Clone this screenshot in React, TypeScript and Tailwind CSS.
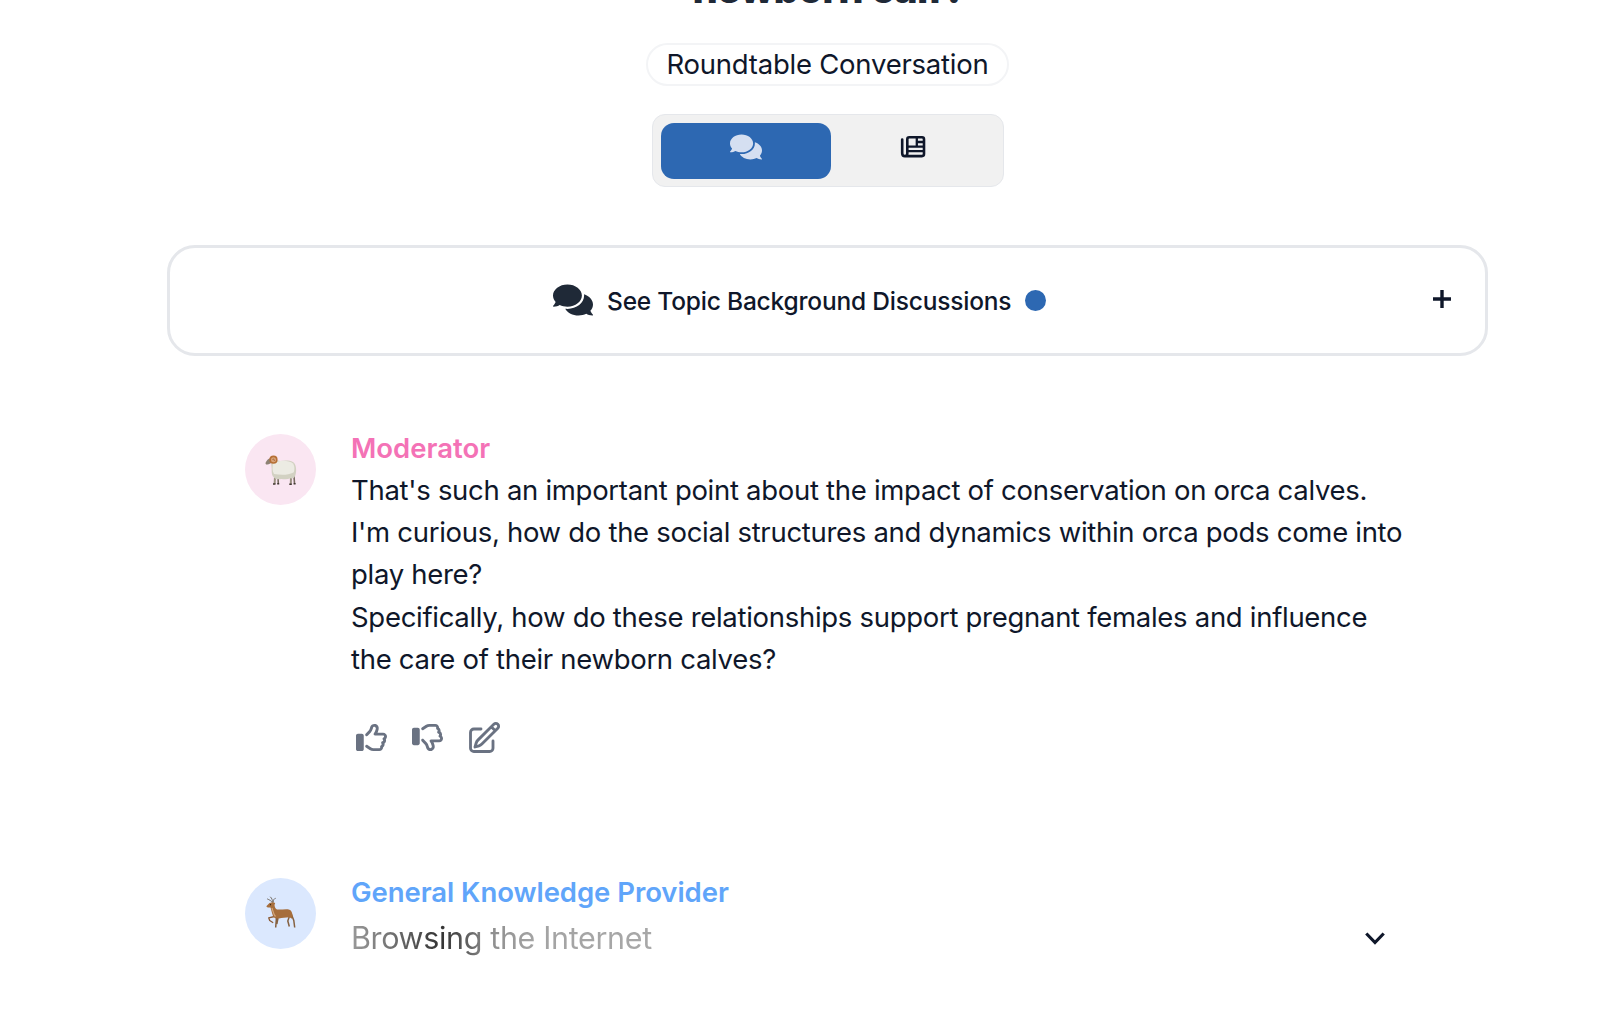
import type { ReactNode } from 'react';
import { FaComments } from 'react-icons/fa';
import { FaRegThumbsUp, FaRegThumbsDown } from 'react-icons/fa6';
import { HiOutlinePencilSquare } from 'react-icons/hi2';

const moderatorLines = [
    "That's such an important point about the impact of conservation on orca calves.",
    "I'm curious, how do the social structures and dynamics within orca pods come into",
    'play here?',
    'Specifically, how do these relationships support pregnant females and influence',
    'the care of their newborn calves?',
];

function NewsIcon() {
    return (
        <svg viewBox="0 0 36 34" className="h-[34px] w-[36px]" fill="none" stroke="currentColor" strokeWidth="2.6">
            <path d="M6.200 9.500v13.700c0 1.800 1 2.900 2.700 2.900H26c1.200 0 2-.8 2-2V9.200c0-1.200-.8-2-2-2H13.300c-1.200 0-2 .8-2 2v14.300c0 1.700-.9 2.600-2.400 2.600" strokeLinecap="round" />
            <path d="M12 16.600h16M12 21.200h16M20.800 8v8.500M21 12h7" strokeWidth="2.3" />
        </svg>
    );
}

function Ram() {
    return (
        <svg viewBox="0 0 42 42" className="h-[42px] w-[42px]">
            <path d="M18 28 18.300 34.500M34 27 34.500 34.500" stroke="#75695f" strokeWidth="1.600" />
            <path d="M15 28 14.600 35M31 28 30.800 35" stroke="#9a9080" strokeWidth="2" />
            <path d="M13 35h2.500M17.200 34.800h2M29.300 35.200h2.500M33.600 34.800h2" stroke="#413932" strokeWidth="1.500" />
            <path d="M11 12.500c2-2.500 6-1.500 9-.4 4-.9 9.500-1.100 13 .9 3.600 2.400 3.800 9.500 2.300 13.500-.8 2.500-2.700 3.500-4.500 2.800-3.500 1.300-6.500 1.200-9.500.6-3 .9-6.300.4-7.800-1.900-2.500-2.600-1.500-6.500-2-10Z" fill="#d2d1c2" />
            <path d="M13 14c5-3 16-3.500 20 .5 2 3 1.500 7 .5 9-6 3-13 2.500-19.500 1.500-2-3-1.500-7-1-11Z" fill="#ecebe3" />
            <path d="M11 9c-2.500.2-4.300 2.400-5.300 4.500-.5 1.300.2 2.200 1.700 2 1.700-.2 3.200-.8 4.200-2Z" fill="#8d8274" />
            <circle cx="13.500" cy="10.700" r="3.300" fill="#d8a278" stroke="#b66f35" strokeWidth="1.600" />
            <path d="M12.500 10.500c1-1 2.500.2 1.700 1.500" fill="none" stroke="#9a5c2c" strokeWidth=".8" />
        </svg>
    );
}

function Deer() {
    return (
        <svg viewBox="0 0 42 42" className="h-[42px] w-[42px]">
            <path d="M12.300 10.500C11.500 8.800 9.500 8 7.500 7M12.800 10C12 8 12.300 6.500 10.500 5M13.200 10c-.2-2 .8-3.300 2.100-3.600" fill="none" stroke="#777069" strokeWidth="1" strokeLinecap="round" />
            <path d="M16.500 25 15.700 35.500M18 26l-1.200 6M29.500 24l-1.700 5 1.500 5.500M31.500 22.500l2.300 6 .9 7" fill="none" stroke="#85603f" strokeWidth="1.500" strokeLinejoin="round" />
            <path d="m14.500 24.500-5.800 1.300 1 2.700 3.500 2.200" fill="none" stroke="#8c5b35" strokeWidth="1.300" strokeLinejoin="round" />
            <path d="M6.300 14.200 9.500 11l3.500-.7 2.200.7-.7 2c.3 2 .8 3.800 2.500 4.500 4.500.4 9-.8 12.500.2 2 .7 2.800 3 3.100 6l-.6 3-2.500-1.500c-4 .5-7.500.7-10.500 1.200-2.500.6-5-.3-6-2.400-1-2.500-1.500-5.500-2.500-8.500-1.500-.3-3.200.4-4.200-1.300Z" fill="#a66e3c" />
            <path d="M12 16c1 3 1.500 6.500 3.500 8.500" fill="none" stroke="#d2a57a" strokeWidth="1.200" />
            <circle cx="10.500" cy="12.700" r=".6" fill="#2b1a0f" />
        </svg>
    );
}

function Message({ avatar, tint, children }: { avatar: ReactNode; tint: string; children: ReactNode }) {
    return (
        <div className="flex gap-[35px]">
            <div className={`flex h-[71px] w-[71px] shrink-0 items-center justify-center rounded-full ${tint}`}>{avatar}</div>
            <div className="-mt-[6px] flex-1">{children}</div>
        </div>
    );
}

export default function App() {
    return (
        <div className="h-[1011px] overflow-hidden bg-white font-['Inter',sans-serif] text-[#0f172a]">
            <div className="ml-[167px] flex w-[1321px] flex-col">
                <header className="flex flex-col items-center">
                    <h1 className="-mt-[35px] ml-[3px] h-[46px] text-[40px] leading-[48px] font-extrabold tracking-[-0.8px] whitespace-nowrap text-[#1f2937]">
                        newborn calf?
                    </h1>
                    <div className="mt-8 flex h-[43px] w-[363px] items-center justify-center rounded-full border-2 border-gray-100 text-[27.5px] tracking-[-0.24px] whitespace-nowrap">
                        Roundtable Conversation
                    </div>
                    <div className="mt-7 flex h-[73px] w-[352px] rounded-[13px] border-[1.5px] border-gray-200 bg-[#f1f1f1] px-2 pt-2 pb-[7px]">
                        <button className="flex w-[170px] justify-center rounded-[13px] bg-[#2d68b2] pt-2 text-[#d5dff1]">
                            <FaComments className="h-8 w-8" />
                        </button>
                        <button className="flex flex-1 justify-center pt-[7px] pl-[2px]">
                            <NewsIcon />
                        </button>
                    </div>
                </header>

                {/* Background discussions */}
                <section className="mt-[58px] flex h-[111px] items-center justify-between rounded-[28px] border-[3px] border-gray-200 pr-[36px] pb-[2px] pl-[383px]">
                    <div className="flex items-center">
                        <FaComments className="h-10 w-10 text-[#1f2937]" />
                        <span className="mt-1 ml-[14px] text-[24.5px] font-medium tracking-[-0.2px] whitespace-nowrap">
                            See Topic Background Discussions
                        </span>
                        <span className="mt-px ml-[14px] h-[21px] w-[21px] rounded-full bg-[#2d68b2]" />
                    </div>
                    <svg viewBox="0 0 18 18" className="-mt-[2px] mr-[-2px] h-[18px] w-[18px]" stroke="currentColor" strokeWidth="3.4">
                        <path d="M9 0v18M0 9h18" />
                    </svg>
                </section>

                <main className="mt-[78px] ml-[78px]">
                    <Message avatar={<Ram />} tint="bg-[#fae6f2]">
                        <h2 className="text-[27.5px] leading-[40.5px] font-semibold text-[#f472b6]">Moderator</h2>
                        {moderatorLines.map((line) => (
                            <p key={line} className="text-[27.5px] leading-[42.4px] tracking-[-0.295px] whitespace-nowrap">
                                {line}
                            </p>
                        ))}
                        <div className="mt-[41px] ml-[5px] flex h-8 items-center gap-[25px] text-gray-500">
                            <FaRegThumbsUp className="h-[31px] w-[31px]" />
                            <FaRegThumbsDown className="h-[31px] w-[31px]" />
                            <HiOutlinePencilSquare className="-ml-[2px] h-[36px] w-[36px]" strokeWidth={1.9} />
                        </div>
                    </Message>
                    <div className="mt-[124px]">
                        <Message avatar={<Deer />} tint="bg-[#dbe8fe]">
                            <h2 className="text-[27.5px] leading-[40.5px] font-semibold tracking-[-0.05px] text-[#60a5fa]">General Knowledge Provider</h2>
                            <div className="flex items-center justify-between pt-[3px]">
                                <p className="w-fit bg-[linear-gradient(90deg,#999_0%,#777_12%,#333_30%,#555_37%,#8c8c8c_45%,#a3a3a3_60%,#a8a8a8_100%)] bg-clip-text text-[30.5px] leading-[46px] tracking-[-0.35px] whitespace-nowrap text-transparent">
                                    Browsing the Internet
                                </p>
                                <svg viewBox="0 0 20 13" className="mt-px mr-[103px] h-[13px] w-[20px]" fill="none" stroke="currentColor" strokeWidth="3.2">
                                    <path d="m1.300 1.500 8.700 9 8.700-9" />
                                </svg>
                            </div>
                        </Message>
                    </div>
                </main>
            </div>
        </div>
    );
}
